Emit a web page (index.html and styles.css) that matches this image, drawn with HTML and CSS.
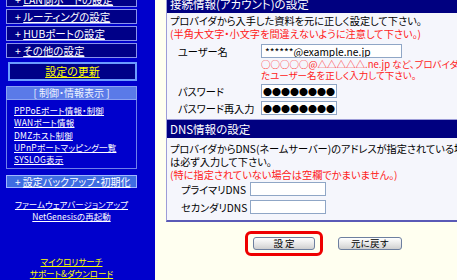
FILE: index.html
```html
<!DOCTYPE html>
<html lang="ja">
<head>
    <meta charset="UTF-8">
    <title>接続情報の設定</title>
    <link rel="stylesheet" href="styles.css">
</head>
<body>
    <div class="page">
        <nav class="side">
            <div class="side-inner">
                <a class="menu" href="#">+ <u>LAN側ポートの設定</u></a>
                <a class="menu" href="#">+ <u>ルーティングの設定</u></a>
                <a class="menu" href="#">+ <u>HUBポートの設定</u></a>
                <a class="menu" href="#">+ <u>その他の設定</u></a>

                <a class="update" href="#">設定の更新</a>

                <div class="info-head">[ 制御・情報表示 ]</div>
                <div class="info-box">
                    <a href="#">PPPoEポート情報・制御</a>
                    <a href="#">WANポート情報</a>
                    <a href="#">DMZホスト制御</a>
                    <a href="#">UPnPポートマッピング一覧</a>
                    <a href="#">SYSLOG表示</a>
                </div>

                <a class="backup" href="#">+ <u>設定バックアップ・初期化</u></a>

                <div class="tools">
                    <a href="#">ファームウェアバージョンアップ</a>
                    <a href="#">NetGenesisの再起動</a>
                </div>

                <div class="vendor">
                    <a href="#">マイクロリサーチ</a>
                    <a href="#">サポート&amp;ダウンロード</a>
                </div>
            </div>
        </nav>

        <main class="main">
            <section class="panel">
                <div class="panel-title">接続情報(アカウント)の設定</div>
                <div class="panel-body account-body">
                    <p>プロバイダから入手した資料を元に正しく設定して下さい。</p>
                    <p class="red">(半角大文字・小文字を間違えないように注意して下さい。)</p>
                    <div class="form account">
                        <label>ユーザー名</label>
                        <input class="wide" type="text" value="******@example.ne.jp">
                        <span></span>
                        <div class="note">○○○○○@△△△△△.ne.jp など、プロバイダから指定され<br>たユーザー名を正しく入力して下さい。</div>
                        <label>パスワード</label>
                        <input class="short dots" type="text" value="●●●●●●●●">
                        <label>パスワード再入力</label>
                        <input class="short dots" type="text" value="●●●●●●●●">
                    </div>
                </div>
            </section>

            <section class="panel last">
                <div class="panel-title">DNS情報の設定</div>
                <div class="panel-body dns-body">
                    <p>プロバイダからDNS(ネームサーバー)のアドレスが指定されている場合</p>
                    <p>は必ず入力して下さい。</p>
                    <p class="red">(特に指定されていない場合は空欄でかまいません。)</p>
                    <div class="form dns">
                        <label>プライマリDNS</label>
                        <input class="dns-input" type="text" value="">
                        <label>セカンダリDNS</label>
                        <input class="dns-input" type="text" value="">
                    </div>
                </div>
            </section>

            <div class="buttons">
                <span class="mark"><button>設 定</button></span>
                <button class="back">元に戻す</button>
            </div>
        </main>
    </div>
</body>
</html>
```

FILE: styles.css
```css
body {
    margin: 0;
    background-color: #fffff0;
    font-family: "Noto Sans CJK JP", sans-serif;
    font-size: 10.2px;
    font-feature-settings: "palt";
    overflow: hidden;
}

p {
    margin: 0;
    white-space: nowrap;
}

.page {
    display: flex;
    height: 280px;
}

/* left menu */

.side {
    width: 155px;
    flex: none;
    background-color: #0000cc;
    overflow: hidden;
}

.side-inner {
    margin-top: -8px;
    padding-left: 6px;
    width: 131px;
}

.side a {
    color: #ffffff;
}

.menu {
    display: block;
    box-sizing: border-box;
    height: 15px;
    margin-bottom: 2px;
    padding-left: 8px;
    border: 1px solid #8a94ec;
    background-color: #000088;
    font-size: 10.5px;
    line-height: 13px;
    text-decoration: none;
    white-space: nowrap;
}

.update {
    display: block;
    box-sizing: border-box;
    height: 19px;
    margin: 4px 0 0 2px;
    border: 2px solid #6c9cff;
    background-color: #000088;
    color: #ffff00 !important;
    font-size: 11px;
    text-align: center;
    line-height: 15px;
}

.info-head {
    box-sizing: border-box;
    height: 14px;
    margin-top: 5px;
    border: 1px solid #8aa2f2;
    background-color: #5a7ae8;
    color: #eef4ff;
    font-size: 10px;
    text-align: center;
    line-height: 12px;
}

.info-box {
    box-sizing: border-box;
    height: 69px;
    padding: 4px 0 0 7px;
    border: 1px solid #6f80ea;
    border-top: none;
}

.info-box a {
    display: block;
    font-size: 8.5px;
    line-height: 12.3px;
    letter-spacing: 0.2px;
}

.backup {
    display: block;
    box-sizing: border-box;
    height: 13px;
    margin-top: 6px;
    padding-left: 8px;
    border: 1px solid #a0b6ff;
    background-color: #3e6ce2;
    font-size: 10px;
    line-height: 11px;
    text-decoration: none;
    white-space: nowrap;
}

.tools,
.vendor {
    text-align: center;
}

.tools {
    margin-top: 10px;
}

.tools a,
.vendor a {
    display: block;
    font-size: 8.5px;
    line-height: 12px;
}

.vendor {
    margin-top: 33px;
}

.vendor a {
    color: #ffff00;
}

/* right content */

.main {
    flex: 1;
    padding-left: 11px;
    margin-top: -6px;
    overflow: hidden;
}

.panel {
    width: 370px;
    border: 1px solid #9c9cd8;
    border-bottom: none;
    background-color: #f5f6fc;
}

.panel.last {
    border-bottom: 2px solid #5a5ab6;
}

.panel-title {
    height: 18px;
    padding-left: 3px;
    background-color: #000080;
    color: #ffffff;
    font-size: 11.5px;
    line-height: 18px;
}

.panel-body {
    padding: 1px 0 3px 3px;
    line-height: 13px;
}

.account-body {
    padding-bottom: 4px;
}

.red {
    color: #ff2020;
}

.form {
    display: grid;
    align-items: center;
    white-space: nowrap;
}

.account {
    grid-template-columns: 83px auto;
    row-gap: 3px;
    margin: 4px 0 0 8px;
}

.note {
    color: #ff2020;
    font-size: 9.5px;
    line-height: 11px;
    margin-top: -2px;
}

input {
    box-sizing: border-box;
    height: 14px;
    padding: 0 3px;
    border: 1px solid #8fa6c6;
    background-color: #ffffff;
    font-family: "Noto Sans CJK JP", sans-serif;
    font-size: 10.2px;
    justify-self: start;
}

.wide {
    width: 141px;
}

.short {
    width: 76px;
}

.dots {
    padding: 0 1px;
    font-size: 9px;
    font-feature-settings: normal;
}

.dns-body {
    padding-top: 4px;
    padding-bottom: 6px;
}

.dns {
    grid-template-columns: 69px auto;
    row-gap: 4px;
    margin: 1px 0 0 11px;
}

.dns-input {
    width: 76px;
}

/* buttons */

.buttons {
    display: flex;
    align-items: center;
    gap: 15px;
    margin-top: 9px;
    padding-left: 79px;
}

.mark {
    display: inline-block;
    padding: 3px 5px;
    border: 3px solid #ee0000;
    border-radius: 6px;
}

button {
    display: block;
    width: 62px;
    height: 13px;
    padding: 0;
    border: 1px solid #6d7f9f;
    border-radius: 3px;
    background: linear-gradient(#ffffff, #e4e4e4 60%, #cfcfcf);
    font-family: "Noto Sans CJK JP", sans-serif;
    font-size: 9.5px;
    line-height: 11px;
}

.back {
    width: 64px;
}
```
